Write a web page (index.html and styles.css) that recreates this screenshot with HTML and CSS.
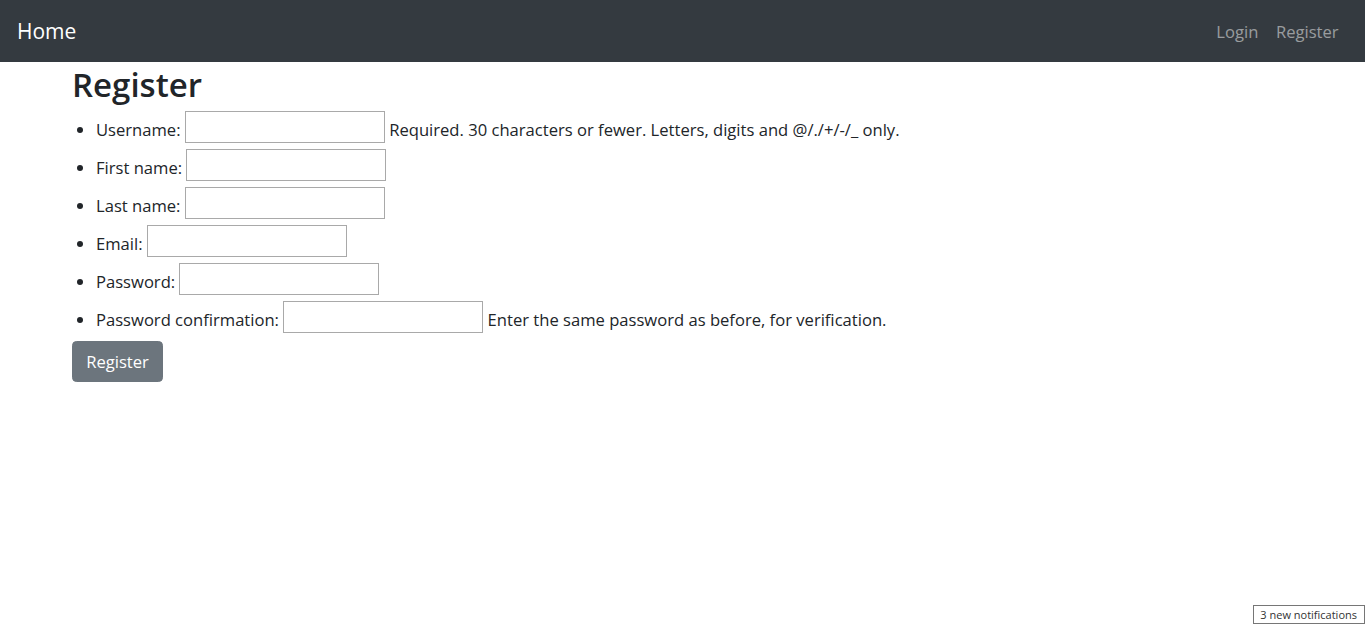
FILE: index.html
```html
<!DOCTYPE html>
<html lang="en">
<head>
<meta charset="utf-8">
<title>Register</title>
<link rel="stylesheet" href="styles.css">
</head>
<body>
<nav class="navbar">
  <a class="brand" href="#">Home</a>
  <div class="nav-links">
    <a class="nav-link" href="#">Login</a>
    <a class="nav-link" href="#">Register</a>
  </div>
</nav>
<main class="content">
  <h1 class="title">Register</h1>
  <form class="form">
    <ul class="fields">
      <li class="field"><label class="label">Username:</label> <input class="input" type="text"> <span class="help">Required. 30 characters or fewer. Letters, digits and @/./+/-/_ only.</span></li>
      <li class="field"><label class="label">First name:</label> <input class="input" type="text"></li>
      <li class="field"><label class="label">Last name:</label> <input class="input" type="text"></li>
      <li class="field"><label class="label">Email:</label> <input class="input" type="email"></li>
      <li class="field"><label class="label">Password:</label> <input class="input" type="password"></li>
      <li class="field"><label class="label">Password confirmation:</label> <input class="input" type="password"> <span class="help">Enter the same password as before, for verification.</span></li>
    </ul>
    <button class="btn" type="button">Register</button>
  </form>
</main>
<div class="notice">3 new notifications</div>
</body>
</html>
```

FILE: styles.css
```css
html, body {
  margin: 0;
  padding: 0;
}
body {
  font-family: "Open Sans", "Noto Sans", sans-serif;
  font-size: 16.6px;
  line-height: 1.5;
  color: #212529;
  background: #fff;
}
.navbar {
  height: 62px;
  background: #343a40;
  display: flex;
  align-items: center;
  justify-content: space-between;
  padding: 2px 17.6px 0 17px;
  box-sizing: border-box;
}
.brand {
  color: #fff;
  text-decoration: none;
  font-size: 21px;
  line-height: 1.5;
}
.nav-links {
  display: flex;
}
.nav-link {
  color: rgba(255, 255, 255, 0.5);
  text-decoration: none;
  font-size: 16.6px;
  padding: 8.8px;
}
.content {
  padding: 0 72px;
}
.title {
  font-size: 33px;
  font-weight: 600;
  line-height: 42px;
  margin: 2px 0 5px;
}
.form {
  margin: 0;
}
.fields {
  margin: 0 0 2px;
  padding: 0 0 0 24px;
}
.field {
  height: 38px;
  display: list-item;
  line-height: 38px;
}
.input {
  width: 200px;
  height: 32px;
  box-sizing: border-box;
  border: 1px solid #a9a9a9;
  padding: 1px 2px;
  vertical-align: 3px;
  font: inherit;
  margin: 0;
}
.btn {
  font: inherit;
  color: #fff;
  background: #6c757d;
  border: 1px solid #6c757d;
  border-radius: 4.4px;
  padding: 0 13.2px;
  height: 41px;
  line-height: 39px;
  cursor: pointer;
}
.notice {
  position: fixed;
  right: 0;
  bottom: 1px;
  font-size: 11px;
  line-height: 17px;
  padding: 0 7px 0 6px;
  border: 1px solid #767676;
  color: #333;
  background: #fff;
}
```
